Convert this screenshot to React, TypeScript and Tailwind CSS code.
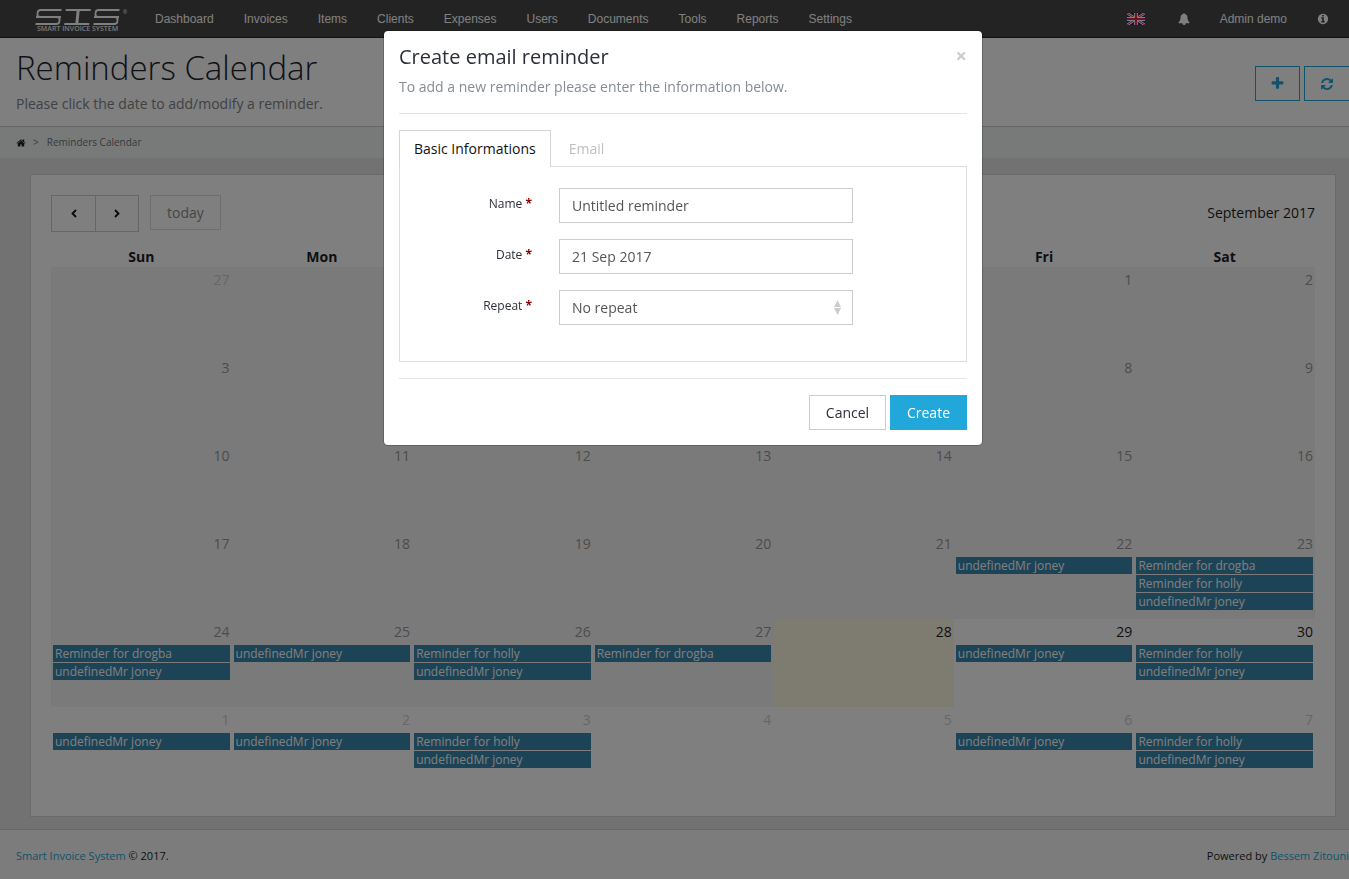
import { useState } from 'react'

const NAV_LINKS = [
  'Dashboard',
  'Invoices',
  'Items',
  'Clients',
  'Expenses',
  'Users',
  'Documents',
  'Tools',
  'Reports',
  'Settings',
]

const WEEKDAYS = ['Sun', 'Mon', 'Tue', 'Wed', 'Thu', 'Fri', 'Sat']

const DROGBA = 'Reminder for drogba'
const HOLLY = 'Reminder for holly'
const JONEY = 'undefinedMr joney'

// offsets are counted from Sunday, 27 Aug 2017
const EVENTS: Record<number, string[]> = {
  26: [JONEY],
  27: [DROGBA, HOLLY, JONEY],
  28: [DROGBA, JONEY],
  29: [JONEY],
  30: [HOLLY, JONEY],
  31: [DROGBA],
  33: [JONEY],
  34: [HOLLY, JONEY],
  35: [JONEY],
  36: [JONEY],
  37: [HOLLY, JONEY],
  40: [JONEY],
  41: [HOLLY, JONEY],
}

const TODAY = 32

const ICONS = {
  home: 'M1472 992v480q0 26-19 45t-45 19h-384v-384h-256v384h-384q-26 0-45-19t-19-45v-480q0-1 .5-3t.5-3l575-474 575 474q1 2 1 6zm223-69l-62 74q-8 9-21 11h-3q-13 0-21-7l-692-577-692 577q-12 8-24 7-13-2-21-11l-62-74q-8-10-7-23.5t11-21.5l719-599q32-26 76-26t76 26l244 204v-195q0-14 9-23t23-9h192q14 0 23 9t9 23v408l219 182q10 8 11 21.5t-7 23.5z',
  plus: 'M1600 736v192q0 40-28 68t-68 28h-416v416q0 40-28 68t-68 28h-192q-40 0-68-28t-28-68v-416h-416q-40 0-68-28t-28-68v-192q0-40 28-68t68-28h416v-416q0-40 28-68t68-28h192q40 0 68 28t28 68v416h416q40 0 68 28t28 68z',
  refresh:
    'M1639 1056q0 5-1 7-64 268-268 434.5t-478 166.5q-146 0-282.5-55t-243.5-157l-129 129q-19 19-45 19t-45-19-19-45v-448q0-26 19-45t45-19h448q26 0 45 19t19 45-19 45l-137 137q71 66 161 102t187 36q134 0 250-65t186-179q11-17 53-117 8-23 30-23h192q13 0 22.5 9.5t9.5 22.5zm25-800v448q0 26-19 45t-45 19h-448q-26 0-45-19t-19-45 19-45l138-138q-148-137-349-137-134 0-250 65t-186 179q-11 17-53 117-8 23-30 23h-199q-13 0-22.5-9.5t-9.5-22.5v-7q65-268 270-434.5t480-166.5q146 0 284 55.5t245 156.5l130-129q19-19 45-19t45 19 19 45z',
  bell: 'M912 1696q0-16-16-16-59 0-101.5-42.5t-42.5-101.5q0-16-16-16t-16 16q0 73 51.5 124.5t124.5 51.5q16 0 16-16zm816-288q0 52-38 90t-90 38h-448q0 106-75 181t-181 75-181-75-75-181h-448q-52 0-90-38t-38-90q50-42 91-88t85-119.5 74.5-158.5 50-206 19.5-260q0-152 117-282.5t307-158.5q-8-19-8-39 0-40 28-68t68-28 68 28 28 68q0 20-8 39 190 28 307 158.5t117 282.5q0 139 19.5 260t50 206 74.5 158.5 85 119.5 91 88z',
  info: 'M1152 1376v-160q0-14-9-23t-23-9h-96v-512q0-14-9-23t-23-9h-320q-14 0-23 9t-9 23v160q0 14 9 23t23 9h96v320h-96q-14 0-23 9t-9 23v160q0 14 9 23t23 9h448q14 0 23-9t9-23zm-128-896v-160q0-14-9-23t-23-9h-192q-14 0-23 9t-9 23v160q0 14 9 23t23 9h192q14 0 23-9t9-23zm640 416q0 209-103 385.5t-279.5 279.5-385.5 103-385.5-103-279.5-279.5-103-385.5 103-385.5 279.5-279.5 385.5-103 385.5 103 279.5 279.5 103 385.5z',
}

function Icon({ name, className }: { name: keyof typeof ICONS; className: string }) {
  return (
    <svg viewBox="0 0 1792 1792" fill="currentColor" className={className} aria-hidden="true">
      <path d={ICONS[name]} />
    </svg>
  )
}

function Flag() {
  return (
    <svg viewBox="0 0 18 12" className="h-3 w-[18px]" aria-hidden="true">
      <rect width="18" height="12" fill="#1b2c86" />
      <path d="M0 0L18 12M18 0L0 12" stroke="#fff" strokeWidth="2.6" />
      <path d="M0 0L18 12M18 0L0 12" stroke="#e0203c" strokeWidth="1" />
      <path d="M9 0V12M0 6H18" stroke="#fff" strokeWidth="4" />
      <path d="M9 0V12M0 6H18" stroke="#e0203c" strokeWidth="2.2" />
    </svg>
  )
}

function LogoCurve() {
  return (
    <span className="block w-[25px] -skew-x-6">
      <span className="block h-[9px] rounded-l border-2 border-r-0 border-white" />
      <span className="-mt-0.5 block h-[9px] rounded-r border-2 border-l-0 border-white" />
    </span>
  )
}

function Logo() {
  return (
    <a href="#" aria-label="Smart Invoice System" className="block w-[140px] shrink-0 pt-[9px] pl-9 text-white/90">
      <span className="flex items-start gap-1">
        <LogoCurve />
        <span className="flex h-4 w-[25px] -skew-x-6 flex-col items-center">
          <span className="h-0.5 w-full bg-white" />
          <span className="w-[3px] flex-1 bg-white" />
          <span className="h-0.5 w-full bg-white" />
        </span>
        <LogoCurve />
        <span className="text-[5px] leading-[6px]">®</span>
      </span>
      <span className="block pl-px text-[7px] leading-[8px] font-semibold whitespace-nowrap">
        SMART INVOICE SYSTEM
      </span>
    </a>
  )
}

function TopBar() {
  return (
    <header className="flex h-[38px] border-b border-[#222] bg-[#464646] text-white">
      <Logo />
      <nav className="flex flex-1 items-center justify-between pr-[5px] font-['Liberation_Sans',sans-serif] text-[12px] leading-5">
        <div className="flex">
          {NAV_LINKS.map((link) => (
            <a key={link} href="#" className="px-[15px]">
              {link}
            </a>
          ))}
        </div>
        <div className="flex items-center">
          <a href="#" aria-label="Language" className="pr-[18px] pl-[15px]">
            <Flag />
          </a>
          <a href="#" aria-label="Notifications" className="px-[15px]">
            <Icon name="bell" className="h-3 w-3" />
          </a>
          <a href="#" className="px-[15px]">
            Admin demo
          </a>
          <a href="#" aria-label="About" className="px-[15px]">
            <Icon name="info" className="h-3 w-3" />
          </a>
        </div>
      </nav>
    </header>
  )
}

function PageHeader() {
  return (
    <>
      <div className="flex h-[89px] justify-between border-b border-[#ccc] bg-white pl-4">
        <div className="pt-[7px]">
          <h1 className="text-[33px] leading-[46px] font-light text-[#22252f]">Reminders Calendar</h1>
          <p className="pt-[3px] text-[14px] leading-5 text-[#7f8489]">
            Please click the date to add/modify a reminder.
          </p>
        </div>
        <div className="-mr-px flex gap-1 pt-7 text-[#22a7da]">
          <button
            type="button"
            aria-label="Add reminder"
            className="flex h-[35px] w-[45px] items-center justify-center border border-current"
          >
            <Icon name="plus" className="h-[15px] w-[15px]" />
          </button>
          <button
            type="button"
            aria-label="Refresh"
            className="flex h-[35px] w-[46px] items-center justify-center border border-current"
          >
            <Icon name="refresh" className="h-[14px] w-[14px]" />
          </button>
        </div>
      </div>
      <div className="flex h-[31px] items-center bg-[#f1f4f3] pl-4 text-[10px] text-[#6f7478]">
        <a href="#" aria-label="Home" className="text-[#1c1e26]">
          <Icon name="home" className="h-[10px] w-[10px]" />
        </a>
        <span className="pr-2 pl-[7px]">&gt;</span>
        <span>Reminders Calendar</span>
      </div>
    </>
  )
}

function DayCell({ index }: { index: number }) {
  const date = new Date(2017, 7, 27 + index)
  const otherMonth = date.getMonth() !== 8
  const past = index < TODAY

  let bg = ''
  if (past) bg = 'bg-[#f4f4f4]'
  if (index === TODAY) bg = 'bg-[#fcf8e3]'

  let color = 'text-[#1c1e26]'
  if (past) color = 'text-[#999]'
  if (otherMonth) color = 'text-[#cecece]'

  return (
    <td className={`h-[88px] p-0 px-0.5 align-top ${bg}`}>
      <div className={`text-right text-[14px] leading-[26px] ${color}`}>{date.getDate()}</div>
      <div className="flex flex-col gap-px">
        {(EVENTS[index] ?? []).map((title) => (
          <a key={title} href="#" className="block bg-[#3a87ad] px-0.5 text-[12px] leading-[17px] text-white">
            {title}
          </a>
        ))}
      </div>
    </td>
  )
}

function Calendar() {
  return (
    <main className="bg-[#e4e4e4] pt-4 pr-[13px] pb-3 pl-[30px]">
      <section className="border border-[#d4d4d4] bg-white px-5 pt-5 pb-[21px]">
        <div className="flex h-[52px] items-start justify-between">
          <div className="flex items-start">
            <button
              type="button"
              aria-label="Previous month"
              className="flex h-[37px] w-[45px] items-center justify-center border border-[#ccc] text-[#111]"
            >
              <svg viewBox="0 0 6 9" className="h-[9px] w-1.5" fill="none" stroke="currentColor" strokeWidth="1.8">
                <path d="M5 1L1.5 4.5L5 8" />
              </svg>
            </button>
            <button
              type="button"
              aria-label="Next month"
              className="flex h-[37px] w-[43px] items-center justify-center border border-l-0 border-[#ccc] text-[#111]"
            >
              <svg viewBox="0 0 6 9" className="h-[9px] w-1.5" fill="none" stroke="currentColor" strokeWidth="1.8">
                <path d="M1 1L4.5 4.5L1 8" />
              </svg>
            </button>
            <button
              type="button"
              disabled
              className="ml-[11px] h-[35px] w-[71px] border border-[#dcdcdc] text-[14px] text-[#8c8c8c]"
            >
              today
            </button>
          </div>
          <h2 className="text-[14px] leading-9 text-[#1c1e26]">September 2017</h2>
        </div>
        <table className="w-full table-fixed border-collapse">
          <thead>
            <tr className="text-[14px] leading-5 text-[#1c1e26]">
              {WEEKDAYS.map((day) => (
                <th key={day} className="p-0 font-bold">
                  {day}
                </th>
              ))}
            </tr>
          </thead>
          <tbody>
            {[0, 1, 2, 3, 4, 5].map((week) => (
              <tr key={week}>
                {WEEKDAYS.map((day, i) => (
                  <DayCell key={day} index={week * 7 + i} />
                ))}
              </tr>
            ))}
          </tbody>
        </table>
      </section>
    </main>
  )
}

function Footer() {
  return (
    <footer className="flex flex-1 items-start justify-between border-t border-[#d0d0d0] bg-[#f9f9f9] pt-4 pl-4 text-[11px] leading-5 text-[#1c1e26]">
      <p>
        <a href="#" className="text-[#22a7da]">
          Smart Invoice System
        </a>{' '}
        © 2017.
      </p>
      <p>
        Powered by{' '}
        <a href="#" className="text-[#22a7da]">
          Bessem Zitouni
        </a>
      </p>
    </footer>
  )
}

const labelClass = 'w-[132px] pt-[6px] text-right text-[12px] leading-5 text-[#2c2f3a]'
const fieldClass =
  'h-[35px] w-full appearance-none border border-[#ccc] bg-white px-3 text-[14px] text-[#555] outline-none'

function Required() {
  return <span className="font-bold text-[#8b0000]">*</span>
}

function ReminderModal() {
  const [name, setName] = useState('Untitled reminder')
  const [date, setDate] = useState('21 Sep 2017')
  const [repeat, setRepeat] = useState('No repeat')

  return (
    <div className="fixed inset-0 flex items-start justify-center bg-black/50 pt-[30px] pl-[17px]">
      <div
        role="dialog"
        aria-labelledby="modal-title"
        className="w-[600px] rounded-[5px] border border-black/20 bg-white bg-clip-padding p-[15px]"
      >
        <div className="flex items-start justify-between border-b border-[#e5e5e5] pb-4">
          <div>
            <h3 id="modal-title" className="text-[20px] leading-[22px] text-[#2c2f3a]">
              Create email reminder
            </h3>
            <p className="pt-[9px] text-[14px] leading-5 text-[#858c93]">
              To add a new reminder please enter the information below.
            </p>
          </div>
          <button type="button" aria-label="Close" className="text-[20px] leading-5 font-bold text-[#ccc]">
            ×
          </button>
        </div>

        <div role="tablist" className="mt-4 flex text-[14px] leading-5">
          <button
            type="button"
            role="tab"
            aria-selected="true"
            className="relative -mb-px h-[37px] border border-b-0 border-[#d5d5d5] bg-white px-[14px] text-[#111]"
          >
            Basic Informations
          </button>
          <button type="button" role="tab" aria-selected="false" className="h-9 px-[18px] pt-px text-[#bfbfbf]">
            Email
          </button>
        </div>
        <form className="flex flex-col gap-4 border border-[#ddd] pt-[21px] pb-9">
          <div className="flex gap-[27px]">
            <label htmlFor="name" className={labelClass}>
              Name <Required />
            </label>
            <div className="w-[294px]">
              <input id="name" value={name} onChange={(e) => setName(e.target.value)} className={fieldClass} />
            </div>
          </div>
          <div className="flex gap-[27px]">
            <label htmlFor="date" className={labelClass}>
              Date <Required />
            </label>
            <div className="w-[294px]">
              <input id="date" value={date} onChange={(e) => setDate(e.target.value)} className={fieldClass} />
            </div>
          </div>
          <div className="flex gap-[27px]">
            <label htmlFor="repeat" className={labelClass}>
              Repeat <Required />
            </label>
            <div className="relative w-[294px]">
              <select
                id="repeat"
                value={repeat}
                onChange={(e) => setRepeat(e.target.value)}
                className={fieldClass}
              >
                <option>No repeat</option>
                <option>Daily</option>
                <option>Weekly</option>
                <option>Monthly</option>
              </select>
              <svg
                viewBox="0 0 7 15"
                className="pointer-events-none absolute top-[10px] right-3 h-[15px] w-[7px]"
                fill="#ccc"
                aria-hidden="true"
              >
                <path d="M3.5 0L7 7H0zM3.5 15L7 8H0z" />
              </svg>
            </div>
          </div>
        </form>

        <div className="mt-4 flex justify-end gap-1 border-t border-[#e5e5e5] pt-4 text-[14px]">
          <button type="button" className="h-[35px] w-[77px] border border-[#ccc] bg-white text-[#2c2f3a]">
            Cancel
          </button>
          <button type="button" className="h-[35px] w-[77px] bg-[#22a7da] text-white">
            Create
          </button>
        </div>
      </div>
    </div>
  )
}

export default function App() {
  return (
    <div className="flex min-h-screen flex-col overflow-hidden font-['Open_Sans',sans-serif]">
      <TopBar />
      <PageHeader />
      <Calendar />
      <Footer />
      <ReminderModal />
    </div>
  )
}
